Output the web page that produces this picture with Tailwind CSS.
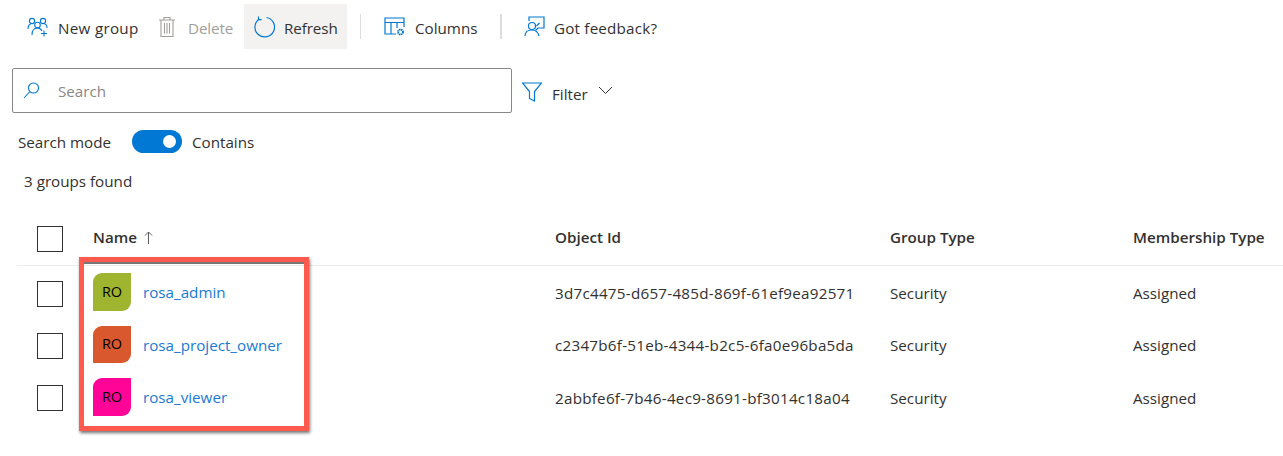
<!DOCTYPE html>
<html lang="en">
<head>
  <meta charset="UTF-8" />
  <title>Groups</title>
  <script src="https://cdn.jsdelivr.net/npm/@tailwindcss/browser@4"></script>
</head>
<body class="bg-white w-[1283px] h-[456px] overflow-hidden relative font-['Open_Sans',sans-serif] text-[15.2px] text-[#323130]">

  <!-- Toolbar -->
  <div class="flex items-center h-[45px] mt-1 ml-[27px]">
    <div class="flex items-center gap-[9px] w-[132px]">
      <svg class="w-[22px] h-[22px] mt-[1px]" viewBox="0 0 22 22" fill="none" stroke="#0078d4" stroke-width="1.1"><circle cx="5" cy="5" r="2.6"/><circle cx="16" cy="5" r="2.6"/><circle cx="10.5" cy="9" r="2.8"/><path d="M1 13c0-3 1.500-5 3-5M20 12c0-2-1-4-2.500-4M5 19c0-4 2-7 5.500-7 2 0 3.500 1 4.500 3"/><path d="M17 14.500v6M14 17.500h6"/></svg>
      <span class="mt-[3px] tracking-[0.3px]">New group</span>
    </div>
    <div class="flex items-center gap-[12px] w-[85px] text-[#a19f9d]">
      <svg class="w-[18px] h-[22px] ml-[-1px] mt-[1px]" viewBox="0 0 18 22" fill="none" stroke="#a19f9d" stroke-width="1.1"><path d="M1 4h16M6 4V1.500h6V4M3 4v16.500h12V4M6.500 7v10.500M9 7v10.500M11.500 7v10.500"/></svg>
      <span class="mt-[3px] tracking-[-0.1px]">Delete</span>
    </div>
    <div class="flex items-center gap-[9px] h-[45px] w-[103px] pl-[9px] bg-[#f3f2f1]">
      <svg class="w-[22px] h-[22px] mt-[1px]" viewBox="0 0 22 22" fill="none" stroke="#0078d4" stroke-width="1.2"><path d="M6 3.200A9.800 9.800 0 1 0 13.500 1.500"/><path d="M5.500 0.500v3.200h3.200"/></svg>
      <span class="mt-[3px] tracking-[-0.1px]">Refresh</span>
    </div>
    <div class="w-px h-[25px] bg-[#dcdcdc] ml-[13px]"></div>
    <div class="flex items-center gap-[9px] ml-[23px] w-[117px]">
      <svg class="w-[22px] h-[20px] mt-[1px]" viewBox="0 0 22 20" fill="none" stroke="#0078d4" stroke-width="1.2"><path d="M12 17H1V1h19v9M1 5.500h19M7 5.500V17M13 5.500V11"/><circle cx="16.500" cy="15" r="2.500" stroke-width="1.800" stroke-dasharray="1.500 0.500"/></svg>
      <span class="mt-[3px]">Columns</span>
    </div>
    <div class="w-[2px] h-[25px] bg-[#dcdcdc] ml-[-1px]"></div>
    <div class="flex items-center gap-[9px] ml-[22px]">
      <svg class="w-[21px] h-[21px] mt-[1px]" viewBox="0 0 21 21" fill="none" stroke="#0078d4" stroke-width="1.2"><path d="M5 5V1h15v11h-6l-2.500 2.500"/><path d="M15.500 7l-3 3"/><circle cx="8" cy="10" r="3.500"/><path d="M1 20c0-4 3-6 7-6s6 2 7 6"/></svg>
      <span class="mt-[3px] tracking-[0.2px]">Got feedback?</span>
    </div>
  </div>

  <!-- Search + filter -->
  <div class="flex items-center mt-[19px] ml-3">
    <div class="flex items-center w-[500px] h-[45px] border border-[#8a8886] rounded-[2px] pl-[10px]">
      <svg class="w-[17px] h-[17px]" viewBox="0 0 17 17" fill="none" stroke="#0078d4" stroke-width="1.1"><circle cx="10.500" cy="6" r="5"/><path d="M7 9.500L1 16"/></svg>
      <span class="ml-[18px] mt-[2px] text-[#8a8886]">Search</span>
    </div>
    <div class="flex items-center ml-[10px] mt-[3px]">
      <svg class="w-5 h-5 mt-[1px]" viewBox="0 0 20 20" fill="none" stroke="#0078d4" stroke-width="1.2"><path d="M0.500 1h19l-7 8.500V19l-5-2.500v-7z"/></svg>
      <span class="ml-[10px] mt-[5px]">Filter</span>
      <svg class="w-[15px] h-[8px] ml-[10px] mt-[-3px]" viewBox="0 0 15 8" fill="none" stroke="#323130" stroke-width="1"><path d="M1 1l6.500 6.500L14 1"/></svg>
    </div>
  </div>

  <!-- Search mode -->
  <div class="flex items-center mt-[16px] ml-[18px] h-[24px]">
    <span class="w-[114px] mt-[2px]">Search mode</span>
    <div class="flex items-center justify-end w-[50px] h-[23px] rounded-full bg-[#0078d4] pr-[6px]">
      <div class="w-[13px] h-[13px] rounded-full bg-white"></div>
    </div>
    <span class="ml-[10px] mt-[2px]">Contains</span>
  </div>

  <div class="mt-[17px] ml-6 h-[23px] leading-[23px]">3 groups found</div>

  <!-- Table -->
  <div class="mt-[25px] ml-[17px]">
    <div class="flex items-center h-[48px] pb-[5px] border-b border-[#edebe9] font-semibold">
      <div class="w-[20px]"></div>
      <div class="w-[26px] h-[26px] border border-[#323130]"></div>
      <div class="w-[30px]"></div>
      <div class="w-[462px] flex items-center gap-[7px] mt-[-3px]">Name
        <svg class="w-[9px] h-[13px]" viewBox="0 0 9 13" fill="none" stroke="#605e5c" stroke-width="1"><path d="M4.500 13V1M1 4.500l3.500-3.500 3.500 3.500"/></svg>
      </div>
      <div class="w-[335px] mt-[-3px]">Object Id</div>
      <div class="w-[243px] mt-[-3px]">Group Type</div>
      <div class="mt-[-3px]">Membership Type</div>
    </div>
    <div class="flex items-center h-[52px] mt-[2px]">
      <div class="w-[20px]"></div>
      <div class="w-[26px] h-[26px] border border-[#323130]"></div>
      <div class="w-[30px]"></div>
      <div class="w-[462px] flex items-center">
        <div class="w-[38px] h-[38px] mt-[-4px] flex items-center justify-center bg-[#9fb42f] text-black text-[14.5px] rounded-tl-[9px] rounded-br-[9px]">RO</div>
        <a class="ml-3 mt-[-4px] text-[#1a7ad4]">rosa_admin</a>
      </div>
      <div class="w-[335px] tracking-[0.26px] mt-[-2px]">3d7c4475-d657-485d-869f-61ef9ea92571</div>
      <div class="w-[243px] mt-[-2px]">Security</div>
      <div class="mt-[-2px]">Assigned</div>
    </div>
    <div class="flex items-center h-[52px]">
      <div class="w-[20px]"></div>
      <div class="w-[26px] h-[26px] border border-[#323130]"></div>
      <div class="w-[30px]"></div>
      <div class="w-[462px] flex items-center">
        <div class="w-[38px] h-[37px] mt-[-4px] flex items-center justify-center bg-[#da582d] text-black text-[14.5px] rounded-tl-[9px] rounded-br-[9px]">RO</div>
        <a class="ml-3 mt-[-2px] text-[#1a7ad4]">rosa_project_owner</a>
      </div>
      <div class="w-[335px] tracking-[0.26px] mt-[-2px]">c2347b6f-51eb-4344-b2c5-6fa0e96ba5da</div>
      <div class="w-[243px] mt-[-2px]">Security</div>
      <div class="mt-[-2px]">Assigned</div>
    </div>
    <div class="flex items-center h-[52px]">
      <div class="w-[20px]"></div>
      <div class="w-[26px] h-[26px] border border-[#323130]"></div>
      <div class="w-[30px]"></div>
      <div class="w-[462px] flex items-center">
        <div class="w-[38px] h-[38px] mt-[-2px] flex items-center justify-center bg-[#ff0497] text-black text-[14.5px] rounded-tl-[9px] rounded-br-[9px]">RO</div>
        <a class="ml-3 mt-[-1px] text-[#1a7ad4]">rosa_viewer</a>
      </div>
      <div class="w-[335px] tracking-[0.26px]">2abbfe6f-7b46-4ec9-8691-bf3014c18a04</div>
      <div class="w-[243px]">Security</div>
      <div>Assigned</div>
    </div>
  </div>

  <!-- Red highlight drawn over the table -->
  <div class="absolute left-[79px] top-[257px] w-[230px] h-[174px] border-[5px] border-[#ff5a4d] shadow-[1px_2px_3px_rgba(0,0,0,0.55)]">
    <div class="w-full h-[2px] bg-[#777]"></div>
  </div>
</body>
</html>
